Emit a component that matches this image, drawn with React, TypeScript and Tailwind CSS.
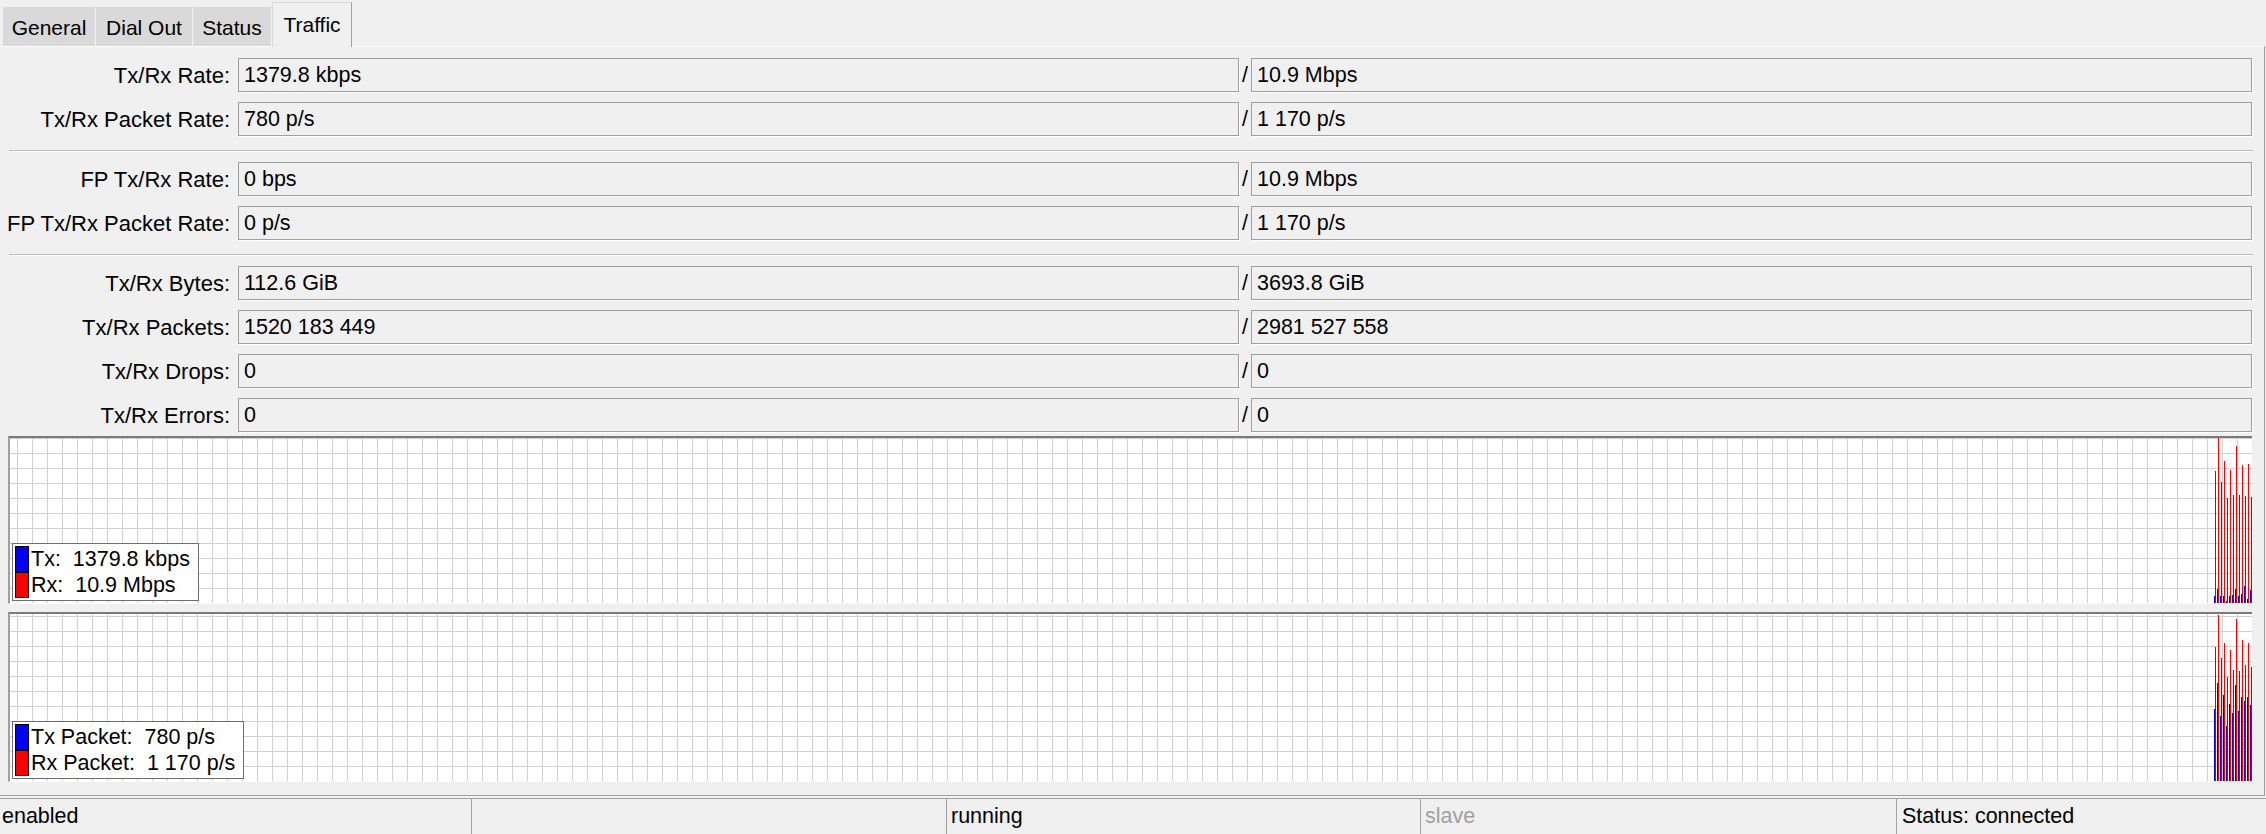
type Row = [string, string, string];

const groups: Row[][] = [
  [
    ["Tx/Rx Rate:", "1379.8 kbps", "10.9 Mbps"],
    ["Tx/Rx Packet Rate:", "780 p/s", "1 170 p/s"],
  ],
  [
    ["FP Tx/Rx Rate:", "0 bps", "10.9 Mbps"],
    ["FP Tx/Rx Packet Rate:", "0 p/s", "1 170 p/s"],
  ],
  [
    ["Tx/Rx Bytes:", "112.6 GiB", "3693.8 GiB"],
    ["Tx/Rx Packets:", "1520 183 449", "2981 527 558"],
    ["Tx/Rx Drops:", "0", "0"],
    ["Tx/Rx Errors:", "0", "0"],
  ],
];

// bar tops, measured from the top of the plot area
const rateRx = [33, 0, 44, 23, 60, 32, 57, 8, 57, 27, 58, 26, 59];
const rateTx = [158, 151, 158, 158, 163, 158, 157, 151, 158, 156, 148, 161, 152];
const pktRx = [33, 1, 44, 29, 63, 36, 56, 5, 57, 26, 51, 29, 53];
const pktTx = [95, 69, 102, 81, 112, 90, 99, 71, 97, 83, 87, 83, 91];

function Field({ value }: { value: string }) {
  return (
    <div className="flex h-[34px] min-w-0 flex-1 items-center whitespace-nowrap border border-[#a0a0a0] bg-[#f0f0f0] pl-[5px] shadow-[1px_1px_0_#ffffff]">
      {value}
    </div>
  );
}

function StatRow({ row }: { row: Row }) {
  return (
    <div className="flex items-center pr-[12px]">
      <div className="w-[238px] shrink-0 whitespace-nowrap pr-[8px] text-right text-[22px]">{row[0]}</div>
      <Field value={row[1]} />
      <div className="w-[12px] shrink-0 text-center">/</div>
      <Field value={row[2]} />
    </div>
  );
}

function Separator() {
  return <div className="ml-[9px] mr-[11px] h-[2px] border-t border-b border-t-[#c0c0c0] border-b-white" />;
}

function Bars({ h, rx, tx }: { h: number; rx: number[]; tx: number[] }) {
  return (
    <svg width={38} height={h} shapeRendering="crispEdges" className="shrink-0">
      {tx.map((t, i) => (
        <rect key={"t" + i} x={i * 3} y={t} width={1} height={h - t} fill="#0000ff" />
      ))}
      {rx.map((t, i) => (
        <rect key={"r" + i} x={i * 3 + 1} y={t} width={1} height={h - t} fill={i % 2 ? "#ff0000" : "#cc0000"} />
      ))}
    </svg>
  );
}

function Legend({ lines }: { lines: [string, string][] }) {
  return (
    <div className="absolute bottom-[2px] left-[2px] border border-[#6e6e6e] bg-white p-[2px]">
      {lines.map(([color, text]) => (
        <div key={text} className="flex">
          <div className={"h-[26px] w-[14px] border border-black " + color} />
          <div className="whitespace-pre pl-[2px] pr-[6px] leading-[26px]">{text}</div>
        </div>
      ))}
    </div>
  );
}

const gridBg =
  "bg-white [background-image:linear-gradient(to_right,#d0d0d0_1px,transparent_1px),linear-gradient(to_bottom,#d0d0d0_1px,transparent_1px)] [background-size:15px_15px] [background-position:right_bottom]";

export default function App() {
  return (
    <div className="h-[834px] w-[2266px] overflow-hidden bg-[#f0f0f0] font-['Liberation_Sans',Arial,sans-serif] text-[21.5px] text-black">
      {/* tabs */}
      <div className="flex h-[46px] items-end pl-[3px] text-[21px]">
        <div className="flex h-[39px] w-[92px] items-center justify-center bg-[#d9d9d9] pt-[2px]">General</div>
        <div className="ml-px flex h-[39px] w-[96px] items-center justify-center bg-[#d9d9d9] pt-[2px]">Dial Out</div>
        <div className="ml-px flex h-[39px] w-[78px] items-center justify-center bg-[#d9d9d9] pt-[2px]">Status</div>
        <div className="relative z-10 -mb-px ml-px flex h-[45px] w-[80px] items-center justify-center border-t border-l border-r border-t-[#d9d9d9] border-l-[#d9d9d9] border-r-[#a0a0a0] bg-[#f0f0f0]">
          Traffic
        </div>
      </div>

      {/* panel */}
      <div className="w-[2265px] border-t border-r border-b border-t-white border-r-[#a0a0a0] border-b-[#a0a0a0] pt-[11px] pb-[13px]">
        <div className="flex flex-col gap-[10px]">
          {groups[0].map((r) => (
            <StatRow key={r[0]} row={r} />
          ))}
        </div>
        <div className="mt-[14px] mb-[10px]">
          <Separator />
        </div>
        <div className="flex flex-col gap-[10px]">
          {groups[1].map((r) => (
            <StatRow key={r[0]} row={r} />
          ))}
        </div>
        <div className="mt-[14px] mb-[10px]">
          <Separator />
        </div>
        <div className="flex flex-col gap-[10px]">
          {groups[2].map((r) => (
            <StatRow key={r[0]} row={r} />
          ))}
        </div>

        <div className={"relative mt-[4px] ml-[8px] mr-[12px] flex h-[168px] justify-end border-t-2 border-l-2 border-b border-t-[#7a7a7a] border-l-[#a0a0a0] border-b-white " + gridBg}>
          <Bars h={165} rx={rateRx} tx={rateTx} />
          <Legend
            lines={[
              ["bg-[#0000ff]", "Tx:  1379.8 kbps"],
              ["bg-[#ff0000]", "Rx:  10.9 Mbps"],
            ]}
          />
        </div>

        <div className={"relative mt-[8px] ml-[8px] mr-[12px] flex h-[170px] justify-end border-t-2 border-l-2 border-b border-t-[#7a7a7a] border-l-[#a0a0a0] border-b-white " + gridBg}>
          <Bars h={167} rx={pktRx} tx={pktTx} />
          <Legend
            lines={[
              ["bg-[#0000ff]", "Tx Packet:  780 p/s"],
              ["bg-[#ff0000]", "Rx Packet:  1 170 p/s"],
            ]}
          />
        </div>
      </div>

      {/* status bar */}
      <div className="mt-[2px] flex h-[36px]">
        <div className="flex w-[471px] items-center border-t border-[#a0a0a0] pl-[2px]">enabled</div>
        <div className="flex w-[475px] items-center border-t border-l border-[#a0a0a0]" />
        <div className="flex w-[474px] items-center border-t border-l border-[#a0a0a0] pl-[4px]">running</div>
        <div className="flex w-[476px] items-center border-t border-l border-[#a0a0a0] pl-[4px] text-[#a0a0a0]">slave</div>
        <div className="flex flex-1 items-center border-t border-l border-[#a0a0a0] pl-[5px]">Status: connected</div>
      </div>
    </div>
  );
}
